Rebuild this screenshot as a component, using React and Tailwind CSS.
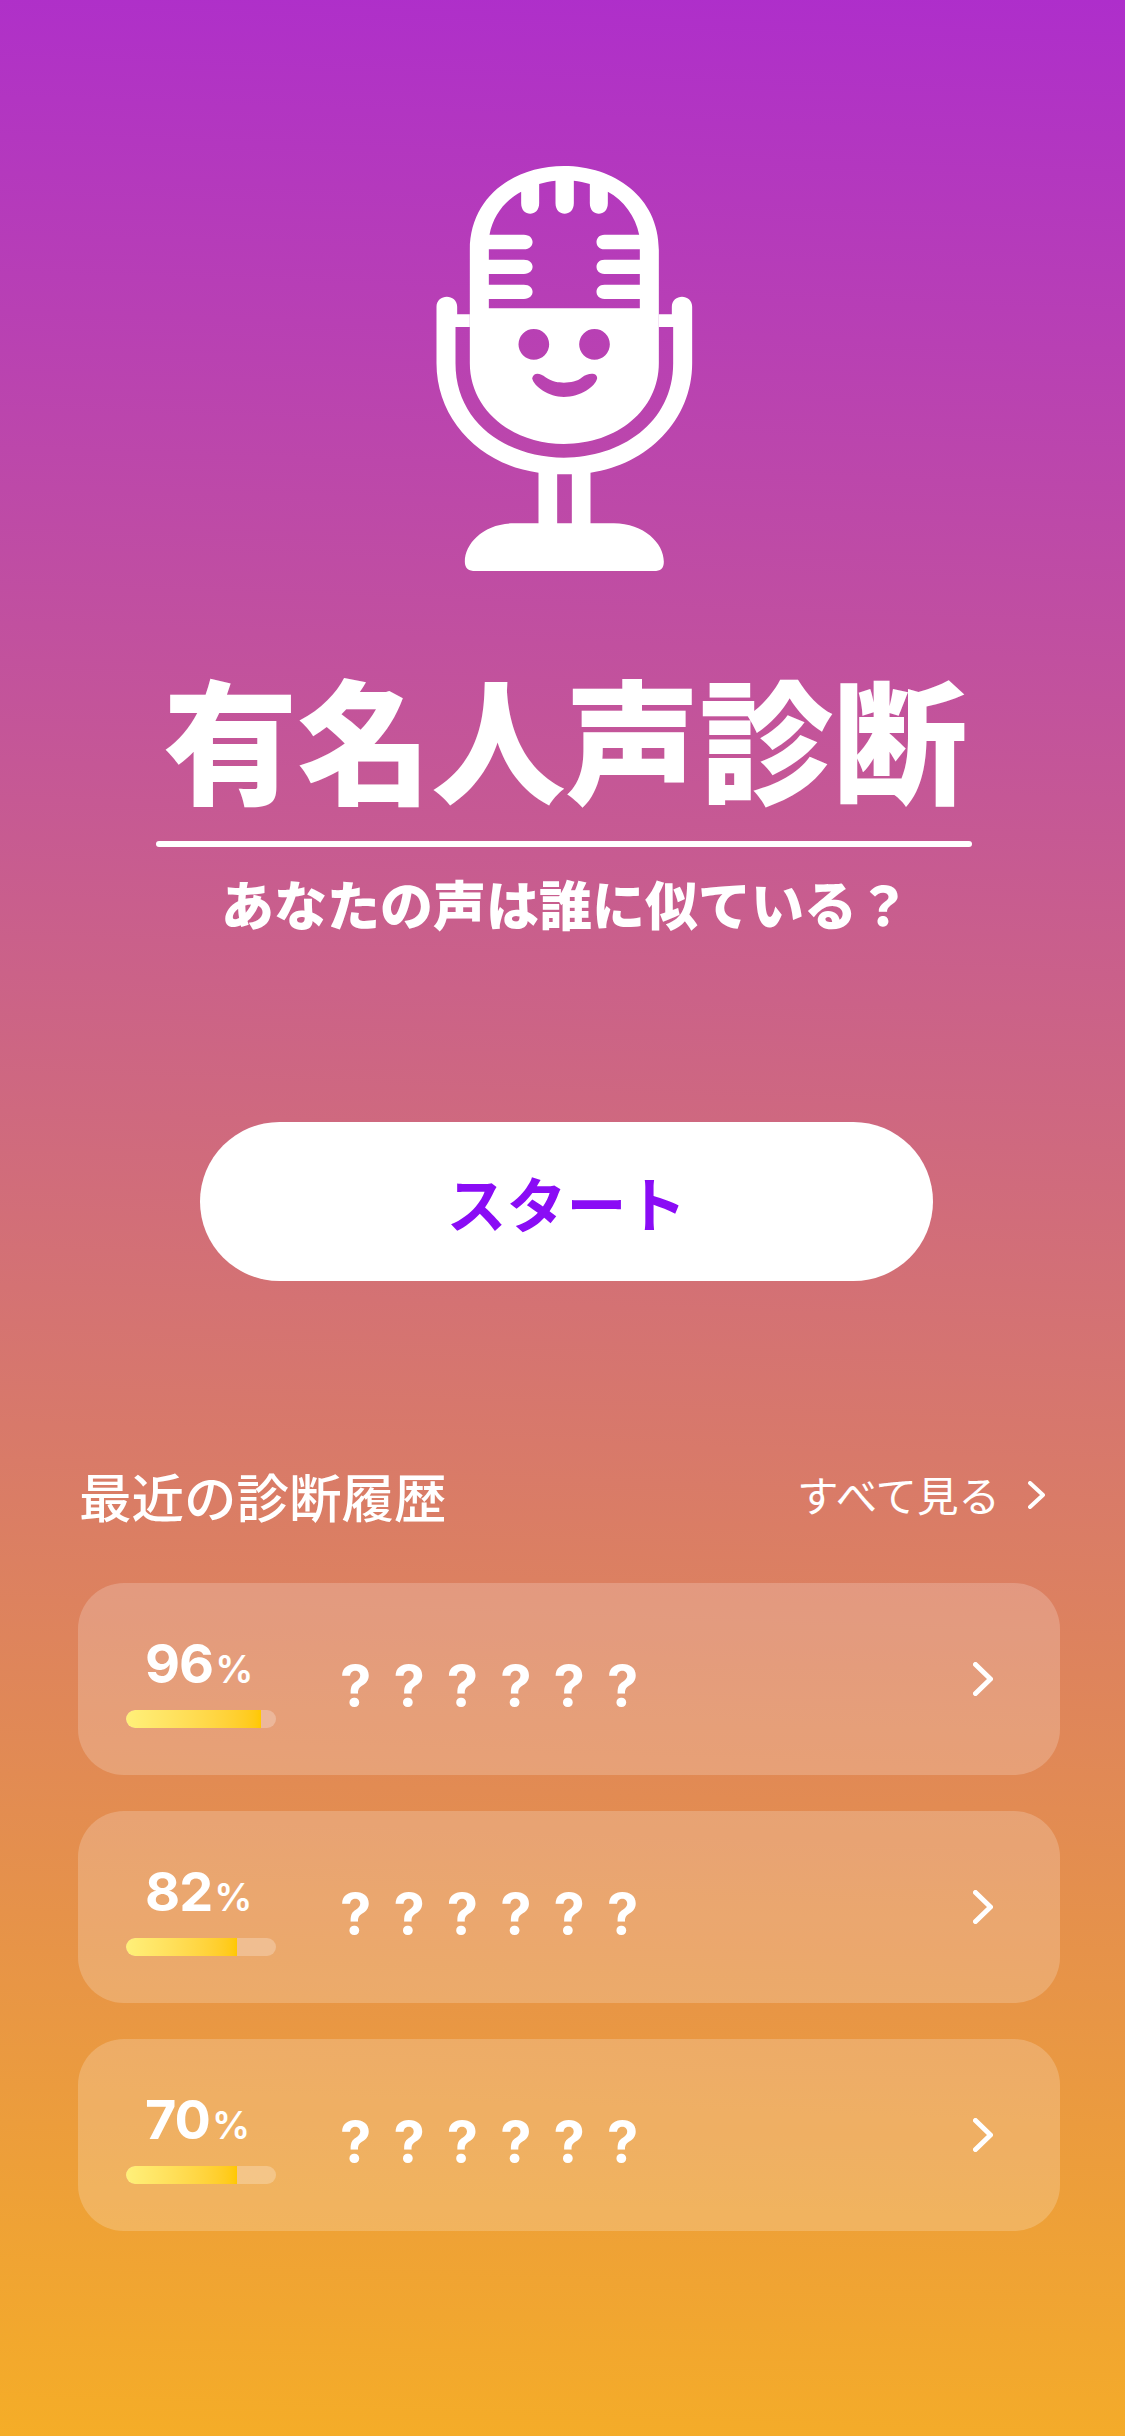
const records = [
  { score: 96, fill: 135 },
  { score: 82, fill: 111 },
  { score: 70, fill: 111 },
];

function Mic() {
  return (
    <svg width="330" height="460" viewBox="-7.5 0 990 1380" className="block mx-auto" fill="#fff" fillRule="evenodd">
      {/* head with grille teeth + face */}
      <path d="M208 330C208 170 340 78 490 78C640 78 775 170 775 330V670C775 810 650 912 490 912C335 912 208 810 208 670Z
        M265 505H718V477H612C580 477 580 434 612 434H718V402H612C580 402 580 359 612 359H718V328H612C580 328 580 284 612 284H716C705 230 670 180 622 155V190C622 232 568 232 568 190V132C552 127 535 124 520 122V190C520 232 465 232 465 190V122C448 124 432 127 416 132V190C416 232 362 232 362 190V155C315 180 278 225 267 284H370C405 284 405 328 370 328H265V359H370C405 359 405 402 370 402H265V434H370C405 434 405 477 370 477H265Z
        M354 613a46 46 0 1 0 92 0a46 46 0 1 0 -92 0Z
        M536 613a46 46 0 1 0 92 0a46 46 0 1 0 -92 0Z
        M395 715C400 695 420 700 435 712C455 726 475 728 490 728C510 728 530 725 545 712C560 700 590 695 590 715C585 740 540 771 490 771C445 771 400 740 395 715Z" />
      {/* cradle, stem and foot */}
      <path d="M108 500C108 460 170 460 170 500V523H208V561H165V670C165 850 320 953 490 953C660 953 818 850 818 670V561H775V523H814V500C814 460 875 460 875 500V670C875 840 740 975 570 998V1150H640C730 1150 790 1210 790 1265C790 1285 780 1293 760 1293H225C205 1293 193 1285 193 1265C193 1210 250 1150 340 1150H414V998C240 975 108 840 108 670Z
        M470 1003H514V1150H470Z" />
    </svg>
  );
}

function Chevron({ w, h, sw }) {
  return (
    <svg width={w} height={h} viewBox={`0 0 ${w} ${h}`} fill="none" stroke="#fff" strokeWidth={sw} strokeLinecap="round" strokeLinejoin="round">
      <path d={`M${sw / 2} ${sw / 2}L${w - sw / 2} ${h / 2}L${sw / 2} ${h - sw / 2}`} />
    </svg>
  );
}

function RecordCard({ score, fill }) {
  return (
    <div className="h-[192px] rounded-[46px] bg-white/20 flex items-center pl-[48px] pr-[67px]">
      <div className="w-[150px] shrink-0 flex flex-col pt-[3px]">
        <div className="flex items-baseline text-white font-bold leading-[60px] h-[60px] ml-[19px] tracking-[-1px]" style={{ fontFamily: "Inter, sans-serif" }}>
          <span className="text-[54px]">{score}</span>
          <span className="text-[38px] font-semibold ml-[2px]">%</span>
        </div>
        <div className="w-[150px] h-[18px] rounded-full bg-white/25 overflow-hidden mt-[16px]">
          <div className="h-full rounded-l-full bg-gradient-to-r from-[#fff07a] to-[#ffc800]" style={{ width: fill }}></div>
        </div>
      </div>
      <div className="ml-[64px] flex-1 pt-[14px] text-white font-bold text-[56px] tracking-[4.4px] leading-none whitespace-pre" style={{ fontFamily: "Inter, sans-serif" }}>? ? ? ? ? ?</div>
      <Chevron w={20} h={34} sw={5} />
    </div>
  );
}

export default function App() {
  return (
    <div className="w-full h-[2436px] bg-[linear-gradient(182deg,#ae2ecb,#f5ad27)] flex flex-col text-white" style={{ fontFamily: '"Noto Sans CJK JP", sans-serif' }}>
      <div className="pt-[140px]">
        <Mic />
      </div>

      <div className="mt-[61px] pl-[6px] text-center font-black text-[134px] leading-[150px]">有名人声診断</div>
      <div className="mt-[30px] ml-[156px] w-[816px] h-[6px] rounded-full bg-white"></div>
      <div className="mt-[24px] pl-[6px] text-center font-black text-[53px] leading-[64px]">あなたの声は誰に似ている？</div>

      <button className="mt-[187px] ml-[200px] w-[733px] h-[159px] rounded-full bg-white text-[#8a0cf5] font-bold text-[60px] flex items-center justify-center">スタート</button>

      <div className="mt-[178px] pl-[79px] pr-[80px] flex items-center justify-between h-[72px]">
        <div className="text-[52.5px] font-medium leading-none">最近の診断履歴</div>
        <div className="flex items-center gap-[28px]">
          <span className="text-[41.5px] leading-none">すべて見る</span>
          <Chevron w={17} h={28} sw={4} />
        </div>
      </div>

      <div className="mt-[52px] mx-[78px] w-[982px] flex flex-col gap-[36px]">
        {records.map((r) => (
          <RecordCard key={r.score} {...r} />
        ))}
      </div>
    </div>
  );
}
